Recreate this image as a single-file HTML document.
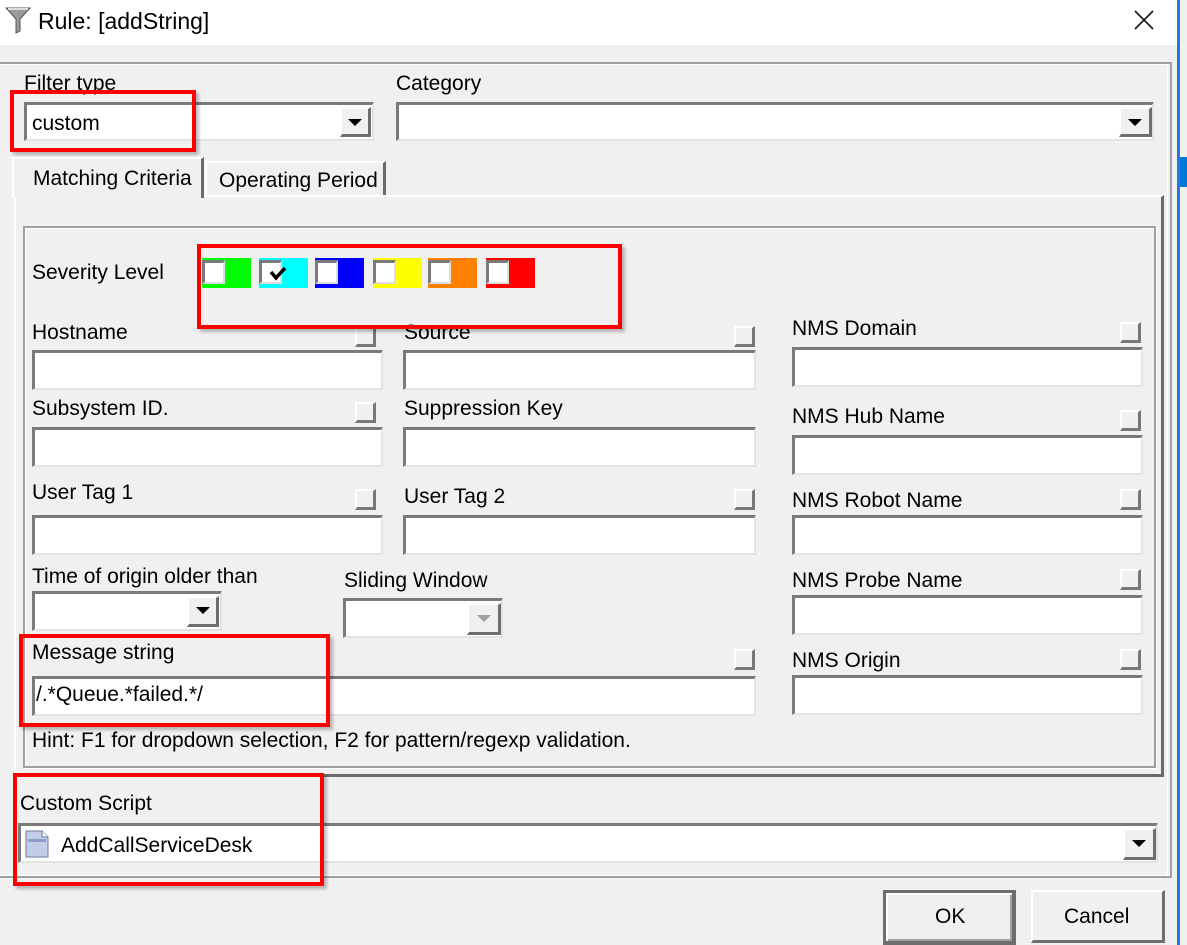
<!DOCTYPE html>
<html><head><meta charset="utf-8"><style>
*{box-sizing:border-box;margin:0;padding:0}
body{width:1187px;height:945px;overflow:hidden;background:#f0f0f0;position:relative;font-family:"Liberation Sans",sans-serif;font-size:21px;color:#000}
.a{position:absolute}
.t{position:absolute;white-space:nowrap;line-height:22px}
.in{position:absolute;background:#fff;border-top:3px solid #7a7a7a;border-left:3px solid #7a7a7a;border-right:2px solid #e3e3e3;border-bottom:2px solid #e3e3e3}
.btn{position:absolute;background:#f0f0f0;border-top:2px solid #fff;border-left:2px solid #fff;border-right:3px solid #6e6e6e;border-bottom:3px solid #6e6e6e}
.arr{position:absolute;width:0;height:0;border-left:7px solid transparent;border-right:7px solid transparent;border-top:7px solid #000}
.cb{position:absolute;width:21px;height:21px;background:#f0f0f0;border-top:2px solid #fff;border-left:2px solid #fff;border-right:3px solid #777;border-bottom:3px solid #777}
.red{position:absolute;border:4px solid #f00;box-shadow:3px 3px 3px rgba(0,0,0,.25)}
.sw{position:absolute;top:258px;width:49px;height:30px}
.sw i{position:absolute;left:0;top:2px;width:23px;height:24px;background:#fff;border-top:3px solid #7a7a7a;border-left:3px solid #7a7a7a;border-right:2px solid #ddd;border-bottom:2px solid #ddd}
</style></head><body>
<div class="a" style="left:0;top:0;width:1177px;height:45px;background:#fff"></div>
<div class="a" style="left:1177px;top:0;width:3px;height:945px;background:#1a7fd8"></div>
<div class="a" style="left:1180px;top:0;width:7px;height:945px;background:#f0f0f0"></div>
<div class="a" style="left:1180px;top:157px;width:7px;height:30px;background:#0078d7"></div>
<svg class="a" style="left:5px;top:6px" width="26" height="28" viewBox="0 0 26 28"><path d="M1 2 H25 L15 13 V25 L11 27 V13 Z" fill="#9a9a9a" stroke="#555" stroke-width="1"/><path d="M3 3 H23" stroke="#ddd" stroke-width="2"/></svg>
<div class="t" style="left:38px;top:10px;font-size:23px">Rule: [addString]</div>
<svg class="a" style="left:1132px;top:8px" width="24" height="24"><path d="M3 3 L21 21 M21 3 L3 21" stroke="#111" stroke-width="1.6"/></svg>

<div class="a" style="left:0;top:62px;width:1172px;height:816px;border:2px solid #a0a0a0;border-left:none"></div>
<div class="a" style="left:0;top:64px;width:1168px;height:812px;border:1px solid #fff;border-left:none"></div>

<div class="t" style="left:24px;top:73px">Filter type</div>
<div class="in" style="left:24px;top:102px;width:350px;height:39px"></div>
<div class="t" style="left:32px;top:113px">custom</div>
<div class="btn" style="left:340px;top:107px;width:31px;height:30px"></div><div class="arr" style="left:348px;top:119px"></div>
<div class="t" style="left:396px;top:73px">Category</div>
<div class="in" style="left:396px;top:102px;width:758px;height:39px"></div>
<div class="btn" style="left:1119px;top:107px;width:33px;height:30px"></div><div class="arr" style="left:1128px;top:119px"></div>

<div class="a" style="left:14px;top:195px;width:1150px;height:582px;border-top:2px solid #fff;border-left:2px solid #fff;border-right:3px solid #6a6a6a;border-bottom:3px solid #6a6a6a"></div>
<div class="a" style="left:12px;top:157px;width:192px;height:41px;background:#f0f0f0;border-top:2px solid #fff;border-left:2px solid #fff;border-right:3px solid #6a6a6a"></div>
<div class="t" style="left:33px;top:168px">Matching Criteria</div>
<div class="a" style="left:205px;top:161px;width:181px;height:34px;border-top:2px solid #fff;border-left:2px solid #fff;border-right:3px solid #6a6a6a"></div>
<div class="t" style="left:219px;top:170px">Operating Period</div>

<div class="a" style="left:23px;top:226px;width:1133px;height:542px;border:2px solid #a0a0a0;box-shadow:inset 1px 1px 0 #fff,1px 1px 0 #fff"></div>

<div class="t" style="left:32px;top:262px">Severity Level</div>
<div class="sw" style="left:202px;background:#00ff00"><i></i></div>
<div class="sw" style="left:259px;background:#00ffff"><i></i></div>
<svg class="a" style="left:269px;top:265px" width="18" height="16"><path d="M2 7 L7 13 L16 3" stroke="#000" stroke-width="3.5" fill="none"/></svg>
<div class="sw" style="left:315px;background:#0000ff"><i></i></div>
<div class="sw" style="left:373px;background:#ffff00"><i></i></div>
<div class="sw" style="left:428px;background:#ff8000"><i></i></div>
<div class="sw" style="left:486px;background:#ff0000"><i></i></div>

<div class="t" style="left:32px;top:322px">Hostname</div><div class="cb" style="left:355px;top:326px"></div>
<div class="in" style="left:32px;top:350px;width:351px;height:40px"></div>
<div class="t" style="left:32px;top:398px">Subsystem ID.</div><div class="cb" style="left:355px;top:402px"></div>
<div class="in" style="left:32px;top:427px;width:351px;height:40px"></div>
<div class="t" style="left:32px;top:482px">User Tag 1</div><div class="cb" style="left:355px;top:489px"></div>
<div class="in" style="left:32px;top:515px;width:351px;height:40px"></div>
<div class="t" style="left:404px;top:322px">Source</div><div class="cb" style="left:734px;top:326px"></div>
<div class="in" style="left:403px;top:350px;width:353px;height:40px"></div>
<div class="t" style="left:404px;top:398px">Suppression Key</div>
<div class="in" style="left:403px;top:427px;width:353px;height:40px"></div>
<div class="t" style="left:404px;top:486px">User Tag 2</div><div class="cb" style="left:734px;top:489px"></div>
<div class="in" style="left:403px;top:515px;width:353px;height:40px"></div>
<div class="t" style="left:792px;top:318px">NMS Domain</div><div class="cb" style="left:1120px;top:322px"></div>
<div class="in" style="left:792px;top:347px;width:351px;height:40px"></div>
<div class="t" style="left:792px;top:406px">NMS Hub Name</div><div class="cb" style="left:1120px;top:410px"></div>
<div class="in" style="left:792px;top:435px;width:351px;height:40px"></div>
<div class="t" style="left:792px;top:490px">NMS Robot Name</div><div class="cb" style="left:1120px;top:489px"></div>
<div class="in" style="left:792px;top:515px;width:351px;height:40px"></div>
<div class="t" style="left:792px;top:570px">NMS Probe Name</div><div class="cb" style="left:1120px;top:569px"></div>
<div class="in" style="left:792px;top:595px;width:351px;height:40px"></div>
<div class="t" style="left:792px;top:650px">NMS Origin</div><div class="cb" style="left:1120px;top:649px"></div>
<div class="in" style="left:792px;top:675px;width:351px;height:40px"></div>

<div class="t" style="left:32px;top:566px">Time of origin older than</div>
<div class="in" style="left:32px;top:591px;width:190px;height:40px"></div>
<div class="btn" style="left:187px;top:596px;width:32px;height:31px"></div><div class="arr" style="left:196px;top:607px"></div>
<div class="t" style="left:344px;top:570px">Sliding Window</div>
<div class="in" style="left:343px;top:598px;width:160px;height:40px"></div>
<div class="btn" style="left:467px;top:603px;width:34px;height:32px"></div><div class="arr" style="left:477px;top:615px;border-top-color:#a0a0a0"></div>

<div class="t" style="left:32px;top:642px">Message string</div><div class="cb" style="left:734px;top:649px"></div>
<div class="in" style="left:32px;top:676px;width:724px;height:40px"></div>
<div class="t" style="left:36px;top:684px">/.*Queue.*failed.*/</div>
<div class="t" style="left:32px;top:730px">Hint: F1 for dropdown selection, F2 for pattern/regexp validation.</div>

<div class="t" style="left:20px;top:793px">Custom Script</div>
<div class="in" style="left:18px;top:823px;width:1140px;height:40px"></div>
<svg class="a" style="left:25px;top:830px" width="25" height="28"><path d="M1 1 H17 L23 7 V27 H1 Z" fill="#c3cde8" stroke="#6d7a9c"/><path d="M17 1 V7 H23" fill="#fff" stroke="#6d7a9c"/><rect x="3" y="9" width="18" height="3" fill="#8e9dc7"/></svg>
<div class="t" style="left:61px;top:835px">AddCallServiceDesk</div>
<div class="btn" style="left:1123px;top:828px;width:33px;height:32px"></div><div class="arr" style="left:1132px;top:840px"></div>

<div class="btn" style="left:883px;top:890px;width:133px;height:55px;border-top:3px solid #6e6e6e;border-left:3px solid #6e6e6e;border-right:4px solid #6e6e6e;border-bottom:4px solid #6e6e6e;box-shadow:inset 2px 2px 0 #fff,inset -2px -2px 0 #a0a0a0"></div>
<div class="t" style="left:935px;top:906px">OK</div>
<div class="btn" style="left:1031px;top:890px;width:134px;height:53px"></div>
<div class="t" style="left:1064px;top:906px">Cancel</div>

<div class="red" style="left:10px;top:90px;width:186px;height:62px"></div>
<div class="red" style="left:197px;top:244px;width:425px;height:85px"></div>
<div class="red" style="left:19px;top:634px;width:311px;height:93px"></div>
<div class="red" style="left:13px;top:773px;width:311px;height:113px"></div>
</body></html>
